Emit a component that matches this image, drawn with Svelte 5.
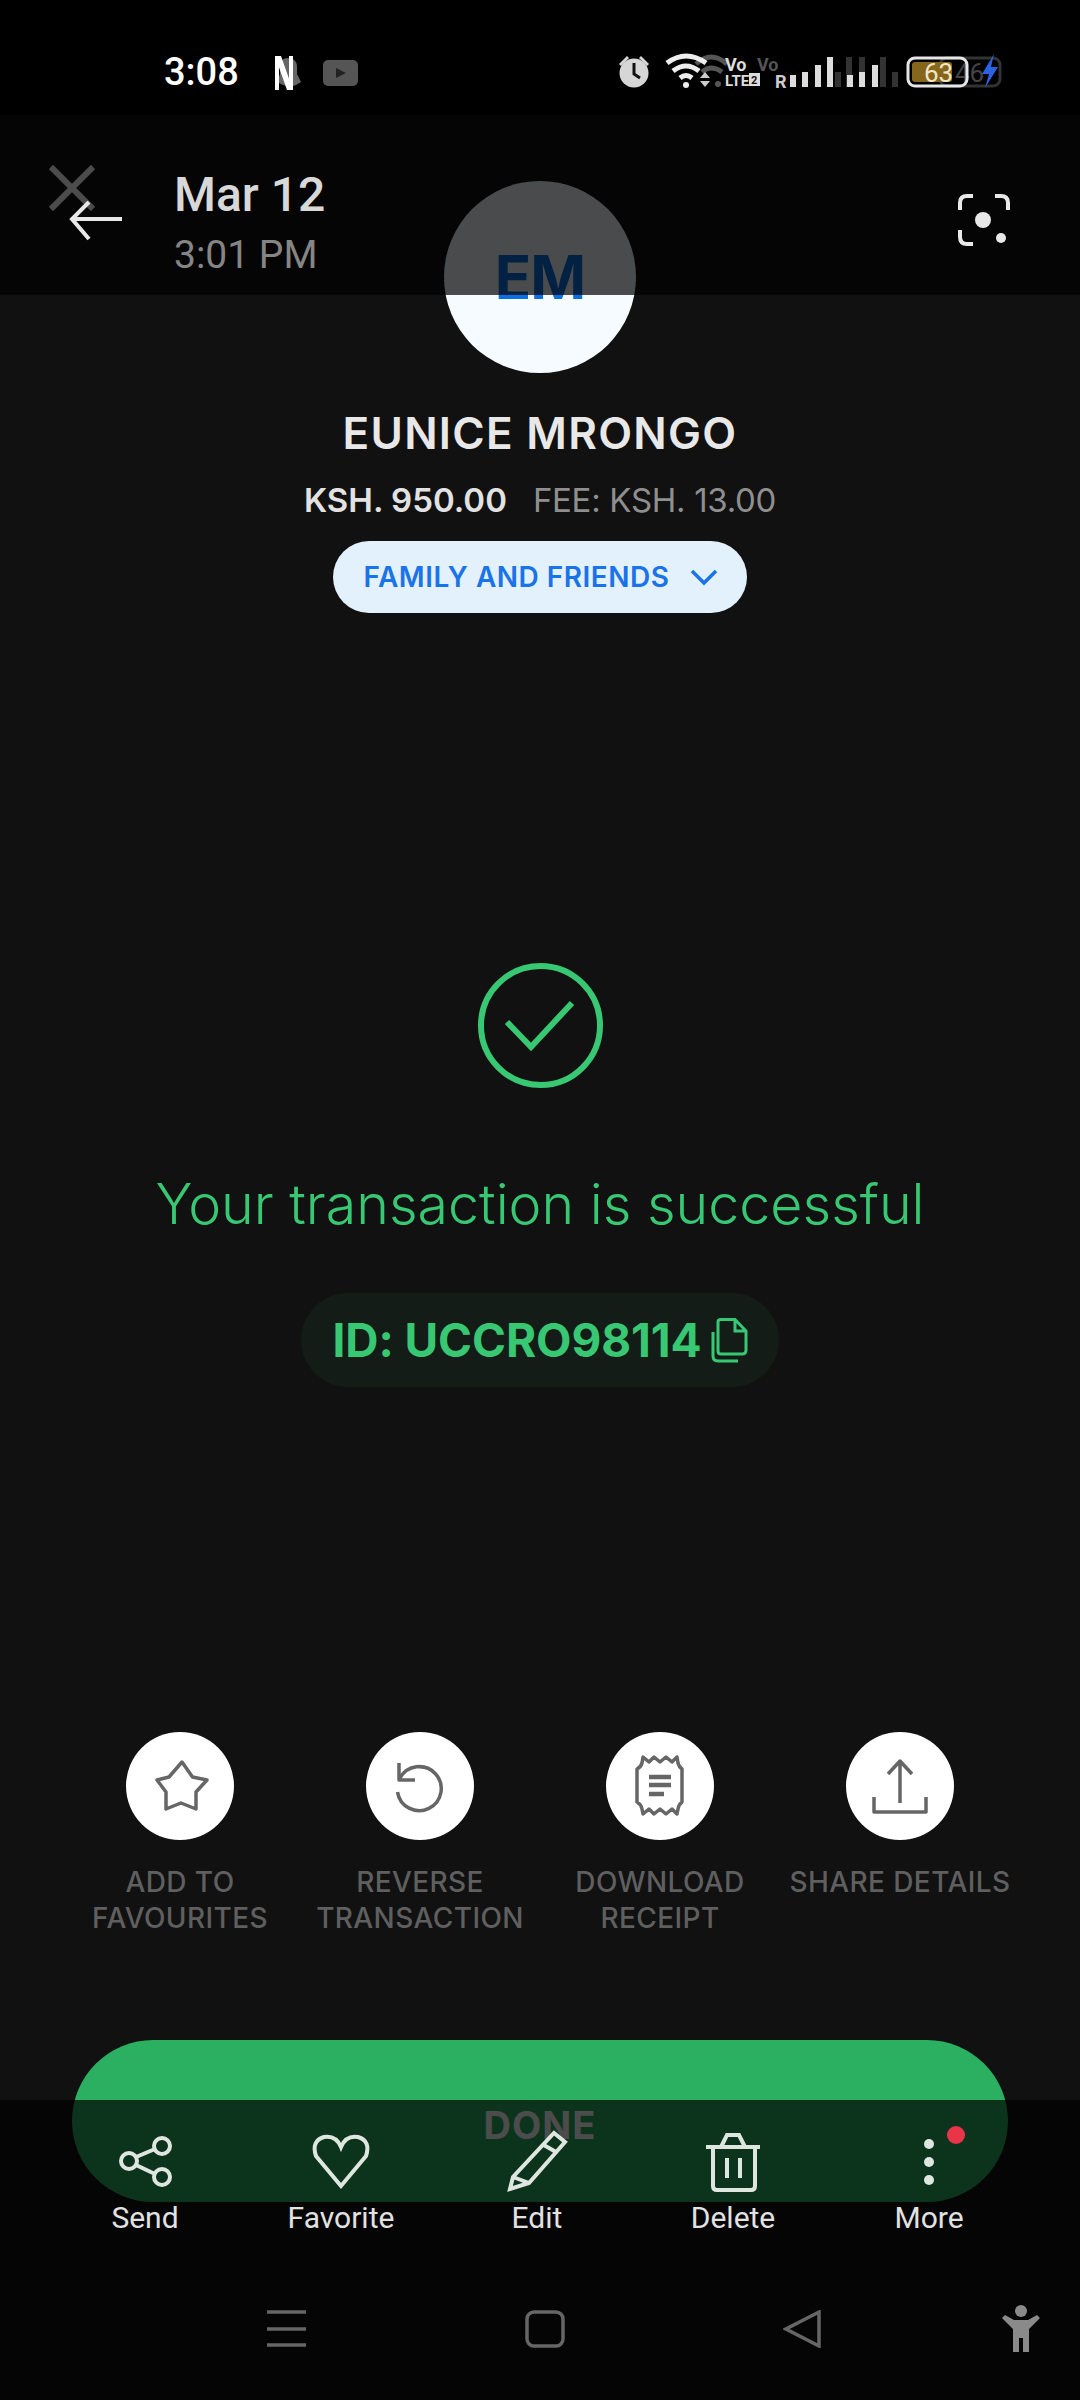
<script>
	const actions = [
		{ id: 'star', lines: ['ADD TO', 'FAVOURITES'] },
		{ id: 'revert', lines: ['REVERSE', 'TRANSACTION'] },
		{ id: 'receipt', lines: ['DOWNLOAD', 'RECEIPT'] },
		{ id: 'share', lines: ['SHARE DETAILS'] }
	];

	const tools = ['Send', 'Favorite', 'Edit', 'Delete', 'More'];
</script>

<div class="screen">
	<main class="page">
		<svg class="close" viewBox="0 0 46 46" aria-hidden="true">
			<path d="M2 2 44 44M44 2 2 44" />
		</svg>

		<section class="summary">
			<div class="avatar">EM</div>
			<h1>EUNICE MRONGO</h1>
			<p class="amounts">
				<strong>KSH. 950.00</strong>
				<span>FEE: KSH. 13.00</span>
			</p>
			<div class="category">
				<span>FAMILY AND FRIENDS</span>
				<svg viewBox="0 0 28 18" aria-hidden="true"><path d="M2 3 14 15 26 3" /></svg>
			</div>
		</section>

		<section class="result">
			<svg class="tick" viewBox="0 0 125 125" aria-hidden="true">
				<circle cx="62.5" cy="62.5" r="59.5" />
				<path d="M29 59 53 84 94 40" />
			</svg>
			<h2>Your transaction is successful</h2>
			<div class="receipt-id">
				<span>ID: UCCRO98114</span>
				<svg viewBox="0 0 37 45" aria-hidden="true">
					<path d="M10 1.5H24L35 13V32Q35 36 31 36H10Q7 36 7 33V4Q7 1.500 10 1.500ZM24 1.500V13H35" />
					<path d="M2 14V38Q2 43 7 43H27" />
				</svg>
			</div>
		</section>

		<section class="actions">
			{#each actions as action (action.id)}
				<div class="action">
					<div class="round">
						<svg viewBox="0 0 108 108" aria-hidden="true">
							{#if action.id === 'star'}
								<path d="M56 30 66.500 45 81 48 70 60 70 77 55 71 40 77 40 60 31 48 43 45Z" />
							{:else if action.id === 'revert'}
								<path d="M34 46A22 22 0 1 1 31.500 60M33 31V48H49" />
							{:else if action.id === 'receipt'}
								<path d="M37 25 36 31Q35 35 31 37V70Q35 72 36 77L37 82 43 77 48 82 54 77 60 82 66 77 71 82 72 77Q73 72 76 70V37Q73 35 72 31L71 25 66 30 60 25 54 30 48 25 43 30Z" />
								<path class="thick" d="M43 45H65M43 53H65M43 62H58" />
							{:else}
								<path d="M54 71V29M42 42 54 29 66 42M28 65V80H80V65" />
							{/if}
						</svg>
					</div>
					<div class="action-label">
						{#each action.lines as line}
							<span>{line}</span>
						{/each}
					</div>
				</div>
			{/each}
		</section>

		<button class="done">DONE</button>
	</main>

	<!-- photo viewer chrome, sits on top of the app screenshot -->
	<div class="viewer">
		<div class="status">
			<span class="clock">3:08</span>
			<svg class="notif" viewBox="0 0 100 40" aria-hidden="true">
				<path fill="#666" d="M8 12Q8 4 16 4T25 12V20L29 28 24 31 18 33 11 31 5 28 8 20Z" />
				<path fill="#fff" d="M3 2H9L21 36H15ZM3 2H7V36H3ZM17 2H21V36H17Z" />
				<rect x="51" y="6" width="35" height="26" rx="5" fill="#555" />
				<path fill="#222" d="M64 14 74 19 64 24Z" />
			</svg>
			<svg class="indicators" viewBox="600 30 420 70" aria-hidden="true">
				<g fill="#d6d6d6">
					<circle cx="634" cy="73" r="14.500" />
					<path d="M619 64 627 56 629 58 621 66ZM649 64 641 56 639 58 647 66Z" />
				</g>
				<path d="M634 63V74L640 78" stroke="#111" stroke-width="3" fill="none" />
				<g fill="none" stroke="#555" stroke-width="5">
					<path d="M696 64Q711 50 727 64M702 72Q711 64 722 72" />
				</g>
				<circle cx="718" cy="84" r="3" fill="#555" />
				<g fill="none" stroke="#eee" stroke-width="5">
					<path d="M667 63Q686 49 706 63M673 71Q686 61 699 71M680 78Q686 73 692 78" />
				</g>
				<circle cx="686" cy="85" r="3" fill="#eee" />
				<path d="M700 78 705 72 710 78ZM700 81H710L705 87Z" fill="#ccc" />
				<text x="725" y="71" class="tiny" fill="#ddd">Vo</text>
				<text x="725" y="86" class="tiny narrow" fill="#ddd">LTE</text>
				<rect x="749" y="73" width="11" height="13" fill="#ddd" />
				<text x="751" y="84" class="micro" fill="#111">2</text>
				<text x="757" y="71" class="tiny" fill="#555">Vo</text>
				<text x="775" y="88" class="tiny" fill="#ccc">R</text>
				<g fill="#333">
					<rect x="835" y="72" width="6" height="15" />
					<rect x="846" y="57" width="6" height="30" />
					<rect x="859" y="57" width="6" height="30" />
					<rect x="880" y="57" width="6" height="30" />
					<rect x="892" y="72" width="6" height="15" />
				</g>
				<g fill="#ddd">
					<rect x="790" y="75" width="6" height="12" />
					<rect x="802" y="72" width="6" height="15" />
					<rect x="815" y="65" width="6" height="22" />
					<rect x="827" y="57" width="6" height="30" />
					<rect x="847" y="75" width="6" height="12" />
					<rect x="859" y="72" width="6" height="15" />
					<rect x="872" y="65" width="6" height="22" />
				</g>
				<rect x="940" y="58" width="60" height="28" rx="7" fill="none" stroke="#333" stroke-width="3" />
				<text x="955" y="82" class="batt" fill="#444">46</text>
				<rect x="912" y="62" width="40" height="20" rx="3" fill="#86661a" />
				<rect x="908" y="58" width="59" height="28" rx="7" fill="none" stroke="#e6e6e6" stroke-width="3" />
				<text x="924" y="82" class="batt" fill="#f0e6c8">63</text>
				<path d="M994 54 982 74H989L985 88 998 67H991Z" fill="#2a62e0" />
			</svg>
		</div>

		<header class="toolbar">
			<svg class="back" viewBox="0 0 54 40" aria-hidden="true">
				<path d="M53 18H3M20 1 3 18 20 38" />
			</svg>
			<div class="when">
				<span class="date">Mar 12</span>
				<span class="time">3:01 PM</span>
			</div>
			<svg class="lens" viewBox="0 0 54 54" aria-hidden="true">
				<path d="M16 3H10Q3 3 3 10V17M38 3H44Q51 3 51 10V17M3 37V44Q3 51 10 51H16" />
				<circle class="dot" cx="26" cy="27" r="8" />
				<circle class="dot" cx="44" cy="45" r="5" />
			</svg>
		</header>

		<footer class="bottom">
			<div class="tools">
				{#each tools as tool (tool)}
					<div class="tool">
						<svg viewBox="0 0 60 60" aria-hidden="true">
							{#if tool === 'Send'}
								<circle cx="47" cy="14" r="8" />
								<circle cx="14" cy="29" r="8" />
								<circle cx="47" cy="45" r="8" />
								<path d="M21 25 40 17M21 33 40 42" />
							{:else if tool === 'Favorite'}
								<path d="M30 54 5 24Q0 9 13 5 25 3 30 15 35 3 47 5 60 9 55 24Z" />
							{:else if tool === 'Edit'}
								<path d="M3 57 6 45 47 1 58 10 22 51ZM6 45 22 51M35 12 49 20" />
							{:else if tool === 'Delete'}
								<path d="M3 15H57M18 15 24 3H36L42 15M10 15V54Q10 58 14 58H48Q52 58 52 54V15M24 26V46M37 26V46" />
							{:else}
								<circle class="fill" cx="30" cy="12" r="5" />
								<circle class="fill" cx="30" cy="30" r="5" />
								<circle class="fill" cx="30" cy="48" r="5" />
								<circle class="alert" cx="57" cy="3" r="9" />
							{/if}
						</svg>
						<span>{tool}</span>
					</div>
				{/each}
			</div>
			<nav class="nav">
				<svg viewBox="0 0 40 38" class="menu" aria-hidden="true"><path d="M0 2H39M0 19H39M0 35H39" /></svg>
				<svg viewBox="0 0 40 38" class="home" aria-hidden="true"><rect x="2" y="2" width="36" height="34" rx="7" /></svg>
				<svg viewBox="0 0 40 38" class="prev" aria-hidden="true"><path d="M36 2 3 19 36 36Z" /></svg>
				<svg viewBox="0 0 42 48" class="person" aria-hidden="true">
					<circle cx="21" cy="6" r="6" />
					<path d="M2 13 5 10 14 15H28L37 10 40 13 29 24V47H23V33H19V47H13V24Z" />
				</svg>
			</nav>
		</footer>
	</div>
</div>

<style>
	:global(body) {
		background: #000;
	}

	.screen {
		position: relative;
		width: 1080px;
		height: 2400px;
		overflow: hidden;
		font-family: Inter, Lato, sans-serif;
	}

	h1,
	h2,
	p {
		margin: 0;
	}

	.page {
		display: flex;
		flex-direction: column;
		align-items: center;
		height: 100%;
		box-sizing: border-box;
		padding-top: 181px;
		background: #111;
	}

	.close {
		position: absolute;
		left: 49px;
		top: 165px;
		width: 46px;
		height: 46px;
		fill: none;
		stroke: #fff;
		stroke-width: 6;
	}

	.summary {
		display: flex;
		flex-direction: column;
		align-items: center;
	}

	.avatar {
		display: flex;
		align-items: center;
		justify-content: center;
		width: 192px;
		height: 192px;
		border-radius: 50%;
		background: #f5fbff;
		color: #0a6fe0;
		font-size: 60px;
		font-weight: 700;
		letter-spacing: -1px;
	}

	h1 {
		margin-top: 35px;
		color: #e8e8e8;
		font-size: 44px;
		font-weight: 600;
		line-height: 50px;
		letter-spacing: 1.3px;
	}

	.amounts {
		display: flex;
		gap: 26px;
		margin-top: 22px;
		font-size: 33px;
		line-height: 40px;
		color: #8f8f8f;
	}

	.amounts span {
		letter-spacing: -0.3px;
	}

	.amounts strong {
		color: #e2e2e2;
		font-weight: 600;
	}

	.category {
		display: flex;
		align-items: center;
		gap: 21px;
		height: 72px;
		margin-top: 21px;
		padding: 0 29px 0 31px;
		border-radius: 36px;
		background: #e3f1fc;
		color: #1a73e8;
		font-size: 28px;
		font-weight: 600;
		letter-spacing: 0.5px;
	}

	.category svg {
		width: 28px;
		height: 18px;
		fill: none;
		stroke: #1a73e8;
		stroke-width: 3.500;
	}

	.result {
		display: flex;
		flex-direction: column;
		align-items: center;
		margin-top: 350px;
	}

	.tick {
		width: 125px;
		height: 125px;
		fill: none;
		stroke: #38c773;
		stroke-width: 6;
	}

	h2 {
		margin-top: 82px;
		color: #38c773;
		font-size: 55.500px;
		font-weight: 300;
		line-height: 68px;
	}

	.receipt-id {
		display: flex;
		align-items: center;
		gap: 10px;
		height: 94px;
		margin-top: 55px;
		padding: 0 31px 0 32px;
		border-radius: 47px;
		background: #131c16;
		color: #38c773;
		font-size: 46px;
		font-weight: 700;
		letter-spacing: -0.1px;
	}

	.receipt-id svg {
		width: 37px;
		height: 45px;
		fill: none;
		stroke: #38c773;
		stroke-width: 3;
	}

	.actions {
		display: grid;
		grid-template-columns: repeat(4, 240px);
		margin-top: 345px;
	}

	.action {
		display: flex;
		flex-direction: column;
		align-items: center;
	}

	.round {
		width: 108px;
		height: 108px;
		border-radius: 50%;
		background: #fff;
	}

	.round svg {
		display: block;
		fill: none;
		stroke: #666;
		stroke-width: 3.500;
		stroke-linejoin: round;
	}

	.round .thick {
		stroke-width: 4.500;
	}

	.action-label {
		display: flex;
		flex-direction: column;
		align-items: center;
		margin-top: 24px;
		color: #5f5f5f;
		font-size: 28px;
		font-weight: 500;
		line-height: 36px;
		letter-spacing: 0.4px;
		white-space: nowrap;
	}

	.done {
		width: 936px;
		height: 162px;
		margin-top: 104px;
		padding: 8px 0 0;
		border: 0;
		border-radius: 81px;
		background: #2bb061;
		color: #fff;
		font-family: inherit;
		font-size: 38px;
		font-weight: 700;
		letter-spacing: 1px;
	}

	.viewer {
		position: absolute;
		inset: 0;
		display: flex;
		flex-direction: column;
	}

	.status {
		position: relative;
		display: flex;
		align-items: center;
		height: 115px;
		background: #000;
	}

	.clock {
		position: absolute;
		left: 164px;
		top: 50px;
		color: #fff;
		font-family: Roboto, sans-serif;
		font-size: 38px;
		font-weight: 500;
		line-height: 44px;
	}

	.notif {
		position: absolute;
		left: 272px;
		top: 54px;
		width: 100px;
		height: 40px;
	}

	.indicators {
		position: absolute;
		left: 600px;
		top: 30px;
		width: 420px;
		height: 70px;
	}

	.tiny {
		font-family: Roboto, sans-serif;
		font-size: 18px;
		font-weight: 700;
	}

	.narrow {
		font-size: 15px;
	}

	.micro {
		font-family: Roboto, sans-serif;
		font-size: 11px;
		font-weight: 700;
	}

	.batt {
		font-family: Roboto, sans-serif;
		font-size: 26px;
	}

	.toolbar {
		position: relative;
		display: flex;
		align-items: flex-start;
		height: 180px;
		background: rgba(0, 0, 0, 0.7);
	}

	.back {
		flex: none;
		width: 54px;
		height: 40px;
		margin: 86px 0 0 69px;
		fill: none;
		stroke: #e8e8e8;
		stroke-width: 4;
	}

	.when {
		display: flex;
		flex-direction: column;
		margin: 53px 0 0 51px;
		font-family: Roboto, sans-serif;
	}

	.date {
		color: #d8d8d8;
		font-size: 48px;
		font-weight: 500;
		line-height: 54px;
	}

	.time {
		margin-top: 10px;
		color: #858585;
		font-size: 39px;
		line-height: 46px;
	}

	.lens {
		width: 54px;
		height: 54px;
		margin: 78px 69px 0 auto;
		fill: none;
		stroke: #e8e8e8;
		stroke-width: 4;
	}

	.lens .dot {
		fill: #e8e8e8;
		stroke: none;
	}

	.bottom {
		display: flex;
		flex-direction: column;
		height: 300px;
		margin-top: auto;
		background: rgba(0, 0, 0, 0.7);
	}

	.tools {
		display: grid;
		grid-template-columns: repeat(5, 196px);
		margin: 32px 0 0 47px;
	}

	.tool {
		display: flex;
		flex-direction: column;
		align-items: center;
		color: #e2e2e2;
		font-family: Roboto, sans-serif;
		font-size: 30px;
		line-height: 34px;
	}

	.tool svg {
		width: 60px;
		height: 60px;
		fill: none;
		stroke: #dfe6df;
		stroke-width: 4;
		overflow: visible;
	}

	.tool .fill {
		fill: #dfe6df;
		stroke: none;
	}

	.tool .alert {
		fill: #ea3548;
		stroke: none;
	}

	.tool span {
		margin-top: 9px;
	}

	.nav {
		position: relative;
		display: grid;
		grid-template-columns: repeat(3, 258px);
		margin: 75px 0 0 267px;
	}

	.nav svg {
		width: 40px;
		height: 38px;
		fill: none;
		stroke: #666;
		stroke-width: 3.500;
	}

	.nav .person {
		position: absolute;
		left: 733px;
		top: -5px;
		width: 42px;
		height: 48px;
		fill: #8a8a8a;
		stroke: none;
	}
</style>
